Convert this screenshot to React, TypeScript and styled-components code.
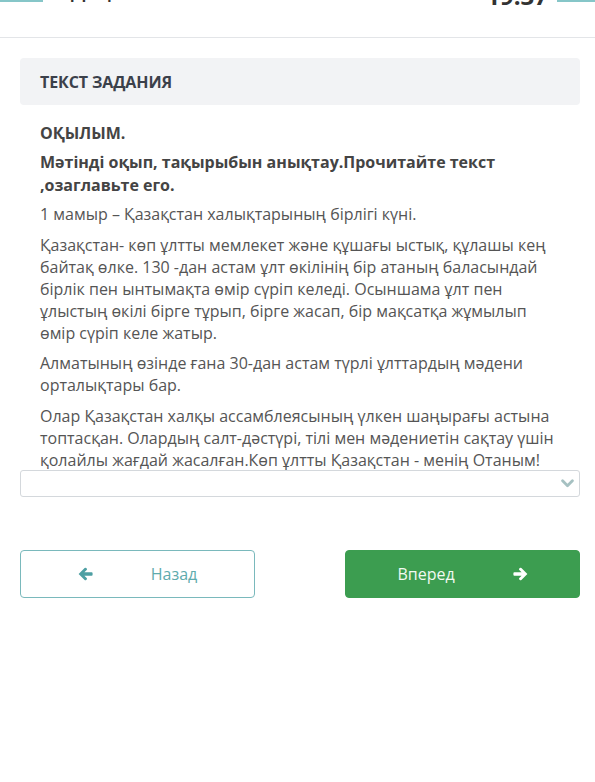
import React from "react";
import styled, { createGlobalStyle } from "styled-components";

const GlobalStyle = createGlobalStyle`
  html, body {
    margin: 0;
    padding: 0;
    background: #fff;
    overflow: hidden;
  }
  body {
    font-family: "Open Sans", "Liberation Sans", sans-serif;
    color: #555;
  }
`;

const Page = styled.div`
  width: 595px;
  height: 782px;
  overflow: hidden;
  background: #fff;
`;

const Header = styled.header`
  display: flex;
  align-items: flex-start;
  height: 37px;
  border-bottom: 1px solid #e3e5e8;
  overflow: hidden;
`;

const HeaderInner = styled.div`
  display: flex;
  align-items: flex-end;
  width: 100%;
  height: 40px;
  margin-top: -38px;
`;

const EdgeBar = styled.div<{ $w: number }>`
  width: ${(p) => p.$w}px;
  height: 100%;
  border-bottom: 2px solid #86c6c8;
  box-sizing: border-box;
  flex-shrink: 0;
`;

const HeaderTitle = styled.div`
  flex: 1;
  padding-left: 28px;
  font-size: 20px;
  font-weight: 600;
  color: #333;
  line-height: 40px;
  transform: translateY(9px);
`;

const Clock = styled.div`
  font-size: 24px;
  font-weight: 700;
  color: #333;
  line-height: 40px;
  padding-right: 9px;
  transform: translateY(14px);
`;

const Main = styled.main`
  padding: 20px 15px 0 20px;
`;

const TaskHead = styled.div`
  background: #f2f3f5;
  border-radius: 4px;
  height: 47px;
  display: flex;
  align-items: center;
  padding: 0 20px;
  font-size: 16px;
  font-weight: 700;
  color: #3b404a;
  letter-spacing: -0.1px;
`;

const TaskBody = styled.div`
  padding: 17px 20px 0;
  font-size: 16px;
  line-height: 22px;
`;

const Para = styled.p<{ $bold?: boolean }>`
  margin: 0 0 ${(p) => (p.$bold ? 6 : 8.5)}px;
  font-weight: ${(p) => (p.$bold ? 700 : 400)};
  color: ${(p) => (p.$bold ? "#444" : "#555")};
  line-height: ${(p) => (p.$bold ? "23px" : "22px")};
  &:last-child {
    margin-bottom: 0;
  }
`;

const Select = styled.div`
  height: 27px;
  margin-top: -1px;
  border: 1px solid #d4d8dc;
  border-radius: 3px;
  box-sizing: border-box;
  display: flex;
  align-items: center;
  justify-content: flex-end;
  padding-right: 5px;
`;

const Actions = styled.div`
  display: flex;
  justify-content: space-between;
  margin-top: 53px;
`;

const NavButton = styled.button<{ $primary?: boolean }>`
  width: 235px;
  height: 48px;
  display: flex;
  align-items: center;
  justify-content: center;
  gap: 58px;
  border-radius: 4px;
  font-family: "Open Sans", "Liberation Sans", sans-serif;
  font-size: 16px;
  cursor: pointer;
  box-sizing: border-box;
  border: 1px solid ${(p) => (p.$primary ? "#3c9d50" : "#7ab9bc")};
  background: ${(p) => (p.$primary ? "#3c9d50" : "#fff")};
  color: ${(p) => (p.$primary ? "#f2f9f2" : "#5eabad")};
  svg {
    color: ${(p) => (p.$primary ? "#fff" : "#4d9fa3")};
  }
`;

const Arrow = ({ dir }: { dir: "left" | "right" }) => (
  <svg
    width="15"
    height="14"
    viewBox="0 0 15 14"
    style={dir === "right" ? { transform: "scaleX(-1)" } : undefined}
  >
    <path
      d="M0.6 7 L6.6 1 Q7.4 0.3 8.2 1 L8.7 1.5 Q9.4 2.3 8.7 3.1 L6.4 5.2 L13.6 5.2 Q14.6 5.2 14.6 6.3 L14.6 7.7 Q14.6 8.8 13.6 8.8 L6.4 8.8 L8.7 10.9 Q9.4 11.7 8.7 12.5 L8.2 13 Q7.4 13.7 6.6 13 Z"
      fill="currentColor"
    />
  </svg>
);

const Chevron = () => (
  <svg width="13" height="9" viewBox="0 0 13 9">
    <path
      d="M1.6 1.8 L6.5 6.7 L11.4 1.8"
      fill="none"
      stroke="#a6c1c2"
      strokeWidth="2.8"
      strokeLinecap="round"
      strokeLinejoin="round"
    />
  </svg>
);

export default function App() {
  return (
    <Page>
      <GlobalStyle />
      <Header>
        <HeaderInner>
          <EdgeBar $w={43} />
          <HeaderTitle>Деңгей</HeaderTitle>
          <Clock>19:37</Clock>
          <EdgeBar $w={38} />
        </HeaderInner>
      </Header>
      <Main>
        <TaskHead>ТЕКСТ ЗАДАНИЯ</TaskHead>
        <TaskBody>
          <Para $bold>ОҚЫЛЫМ.</Para>
          <Para $bold>
            Мәтінді оқып, тақырыбын анықтау.Прочитайте текст ,озаглавьте его.
          </Para>
          <Para>1 мамыр – Қазақстан халықтарының бірлігі күні.</Para>
          <Para>
            Қазақстан- көп ұлтты мемлекет және құшағы ыстық, құлашы кең
            байтақ өлке. 130 -дан астам ұлт өкілінің бір атаның баласындай
            бірлік пен ынтымақта өмір сүріп келеді. Осыншама ұлт пен ұлыстың
            өкілі бірге тұрып, бірге жасап, бір мақсатқа жұмылып өмір сүріп
            келе жатыр.
          </Para>
          <Para>
            Алматының өзінде ғана 30-дан астам түрлі ұлттардың мәдени
            орталықтары бар.
          </Para>
          <Para>
            Олар Қазақстан халқы ассамблеясының үлкен шаңырағы астына
            топтасқан. Олардың салт-дәстүрі, тілі мен мәдениетін сақтау үшін
            қолайлы жағдай жасалған.Көп ұлтты Қазақстан - менің Отаным!
          </Para>
        </TaskBody>
        <Select>
          <Chevron />
        </Select>
        <Actions>
          <NavButton>
            <Arrow dir="left" />
            <span>Назад</span>
          </NavButton>
          <NavButton $primary>
            <span>Вперед</span>
            <Arrow dir="right" />
          </NavButton>
        </Actions>
      </Main>
    </Page>
  );
}
